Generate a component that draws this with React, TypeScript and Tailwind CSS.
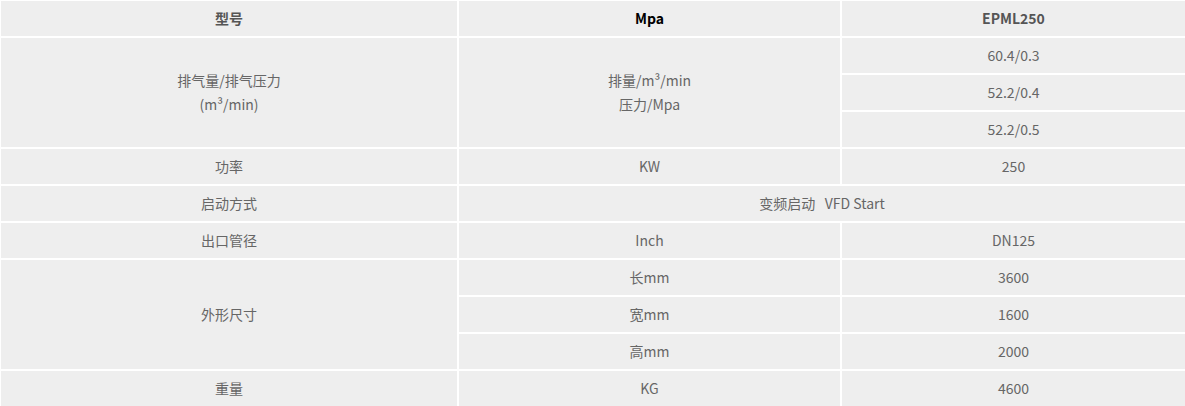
const cell = "border border-white bg-[#eeeeee] h-[37px] p-0 pb-[2px] text-center align-middle";

export default function App() {
  return (
    <div className="w-[1185px] h-[406px] overflow-hidden bg-white">
      <table
        className="w-[1186px] table-fixed border-separate border-spacing-0 text-[14px] leading-[24px] text-[#666]"
        style={{ fontFamily: '"Noto Sans CJK SC", "Noto Sans", sans-serif' }}
      >
        <colgroup>
          <col className="w-[458px]" />
          <col className="w-[383px]" />
          <col className="w-[345px]" />
        </colgroup>
        <tbody>
          <tr>
            <td className={`${cell} font-bold text-[#555]`}>型号</td>
            <td className={`${cell} font-bold text-black`}>Mpa</td>
            <td className={`${cell} font-bold text-[#555]`}>EPML250</td>
          </tr>
          <tr>
            <td className={cell} rowSpan={3}>
              排气量/排气压力
              <br />
              (m³/min)
            </td>
            <td className={cell} rowSpan={3}>
              排量/m³/min
              <br />
              压力/Mpa
            </td>
            <td className={cell}>60.4/0.3</td>
          </tr>
          <tr>
            <td className={cell}>52.2/0.4</td>
          </tr>
          <tr>
            <td className={cell}>52.2/0.5</td>
          </tr>
          <tr>
            <td className={cell}>功率</td>
            <td className={cell}>KW</td>
            <td className={cell}>250</td>
          </tr>
          <tr>
            <td className={cell}>启动方式</td>
            <td className={cell} colSpan={2}>
              变频启动&nbsp;&nbsp; VFD Start
            </td>
          </tr>
          <tr>
            <td className={cell}>出口管径</td>
            <td className={cell}>Inch</td>
            <td className={cell}>DN125</td>
          </tr>
          <tr>
            <td className={cell} rowSpan={3}>外形尺寸</td>
            <td className={cell}>长mm</td>
            <td className={cell}>3600</td>
          </tr>
          <tr>
            <td className={cell}>宽mm</td>
            <td className={cell}>1600</td>
          </tr>
          <tr>
            <td className={cell}>高mm</td>
            <td className={cell}>2000</td>
          </tr>
          <tr>
            <td className={cell}>重量</td>
            <td className={cell}>KG</td>
            <td className={cell}>4600</td>
          </tr>
        </tbody>
      </table>
    </div>
  );
}
